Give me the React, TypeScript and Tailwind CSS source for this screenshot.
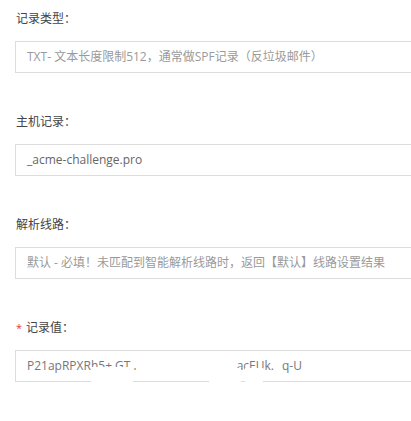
const font = { fontFamily: '"Open Sans", "Noto Sans CJK SC", sans-serif' };

function Label({ text, required }: { text: string; required?: boolean }) {
  return (
    <div className="h-[17px] leading-[17px] text-[12px] text-[#444] mb-[14px] pl-[1px] flex items-center">
      {required && <span className="text-[#e4393c] mr-[4px] text-[11px]">*</span>}
      <span>{text}：</span>
    </div>
  );
}

function Field({ children }: { children: React.ReactNode }) {
  return (
    <div className="relative h-[32px] w-[420px] border border-[#dcdcdc] flex items-center pl-[11px] text-[12px] whitespace-nowrap">
      {children}
    </div>
  );
}

export default function App() {
  return (
    <div className="w-[411px] h-[421px] bg-white overflow-hidden pt-[10px] pl-[15px]" style={font}>
      <div className="flex flex-col">
        <Label text="记录类型" />
        <Field>
          <span className="text-[#9a9a9a]">TXT- 文本长度限制512，通常做SPF记录（反垃圾邮件）</span>
        </Field>

        <div className="mt-[40px]">
          <Label text="主机记录" />
          <Field>
            <span className="text-[#666]">_acme-challenge.pro</span>
          </Field>
        </div>

        <div className="mt-[40px]">
          <Label text="解析线路" />
          <Field>
            <span className="text-[#9a9a9a]">默认 - 必填！未匹配到智能解析线路时，返回【默认】线路设置结果</span>
          </Field>
        </div>

        <div className="mt-[40px]">
          <Label text="记录值" required />
          <Field>
            <span className="text-[#777]">P21apRPXRh5+ GT.i</span>
            <span className="inline-block w-[100px]" />
            <span className="text-[#777]">acEUk.</span>
            <span className="inline-block w-[8px]" />
            <span className="text-[#777]">q-U</span>
            {/* redaction patches */}
            <div className="absolute left-[75px] top-[16px] w-[42px] h-[18px] bg-white" />
            <div className="absolute left-[115px] top-[1px] w-[100px] h-[16px] bg-white" />
            <div className="absolute left-[193px] top-[17px] w-[32px] h-[17px] bg-white" />
            <div className="absolute left-[229px] top-[17px] w-[18px] h-[17px] bg-white" />
          </Field>
        </div>
      </div>
    </div>
  );
}
